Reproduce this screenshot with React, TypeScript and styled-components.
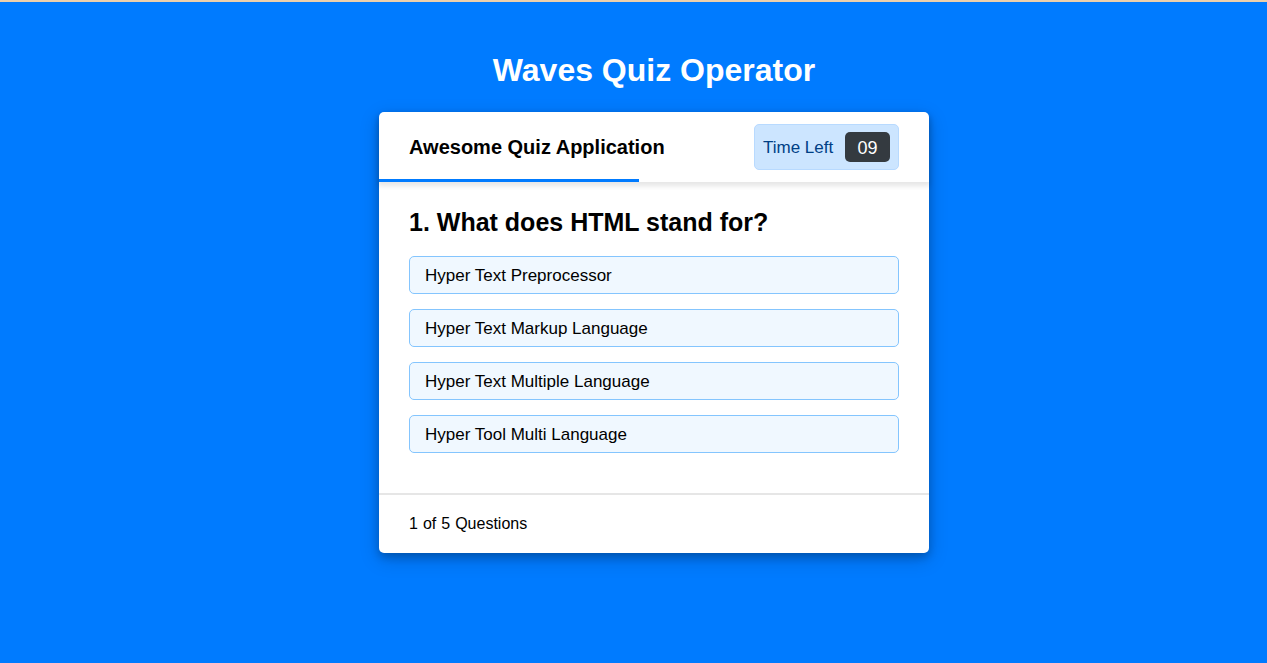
import React from "react";
import styled, { createGlobalStyle } from "styled-components";

const GlobalStyle = createGlobalStyle`
  * { box-sizing: border-box; margin: 0; padding: 0; }
  body {
    background: #007bff;
    color: #000;
    font-family: "Liberation Sans", Arial, sans-serif;
  }
`;

const Page = styled.main`
  display: flex;
  flex-direction: column;
  align-items: center;
  min-height: 100vh;
  border-top: 2px solid #ecd0ac;
  padding: 50px 0 50px 41px;
`;

const Title = styled.h1`
  font-size: 32px;
  line-height: 36px;
  color: #fff;
  margin-bottom: 24px;
`;

const Card = styled.section`
  width: 100%;
  max-width: 550px;
  background: #fff;
  border-radius: 5px;
  box-shadow: 0 4px 8px rgba(0, 0, 0, 0.2), 0 6px 20px rgba(0, 0, 0, 0.19);
`;

const Header = styled.header`
  position: relative;
  display: flex;
  align-items: center;
  justify-content: space-between;
  height: 70px;
  padding: 0 30px;
  border-radius: 5px 5px 0 0;
  box-shadow: 0 3px 5px 1px rgba(0, 0, 0, 0.1);
`;

const Name = styled.h2`
  font-size: 20px;
  line-height: 24px;
  font-weight: 600;
`;

const Timer = styled.div`
  display: flex;
  align-items: center;
  justify-content: space-between;
  width: 145px;
  height: 46px;
  padding: 0 8px;
  color: #004085;
  background: #cce5ff;
  border: 1px solid #b8daff;
  border-radius: 5px;
  font-size: 17px;
  line-height: 32px;
`;

const Seconds = styled.span`
  width: 45px;
  height: 30px;
  border-radius: 5px;
  background: #343a40;
  color: #fff;
  text-align: center;
  font-size: 18px;
`;

const TimerLabel = styled.span`
  height: 30px;
`;

const TimeLine = styled.div`
  position: absolute;
  left: 0;
  bottom: 0;
  width: 260px;
  height: 3px;
  background: #007bff;
`;

const Body = styled.div`
  padding: 25px 30px 40px;
`;

const Question = styled.h3`
  font-size: 25px;
  line-height: 30px;
  font-weight: 600;
`;

const Options = styled.div`
  display: grid;
  gap: 15px;
  padding-top: 19px;
`;

const Option = styled.button`
  height: 38px;
  padding: 2px 15px 0;
  background: #f0f8ff;
  border: 1px solid #84c5fe;
  border-radius: 5px;
  color: #000;
  font: inherit;
  font-size: 17px;
  text-align: left;
  cursor: pointer;
`;

const Footer = styled.footer`
  display: flex;
  align-items: center;
  gap: 5px;
  height: 60px;
  padding: 0 30px;
  border-top: 2px solid #e6e6e6;
  font-size: 16px;
  line-height: 18px;
`;

const options = [
  "Hyper Text Preprocessor",
  "Hyper Text Markup Language",
  "Hyper Text Multiple Language",
  "Hyper Tool Multi Language",
];

export default function App() {
  return (
    <>
      <GlobalStyle />
      <Page>
        <Title>Waves Quiz Operator</Title>
        <Card>
          <Header>
            <Name>Awesome Quiz Application</Name>
            <Timer>
              <TimerLabel>Time Left</TimerLabel>
              <Seconds>09</Seconds>
            </Timer>
            <TimeLine />
          </Header>
          <Body>
            <Question>1. What does HTML stand for?</Question>
            <Options>
              {options.map((text) => (
                <Option key={text} type="button">{text}</Option>
              ))}
            </Options>
          </Body>
          <Footer>
            <span>1</span>
            <span>of</span>
            <span>5</span>
            <span>Questions</span>
          </Footer>
        </Card>
      </Page>
    </>
  );
}
